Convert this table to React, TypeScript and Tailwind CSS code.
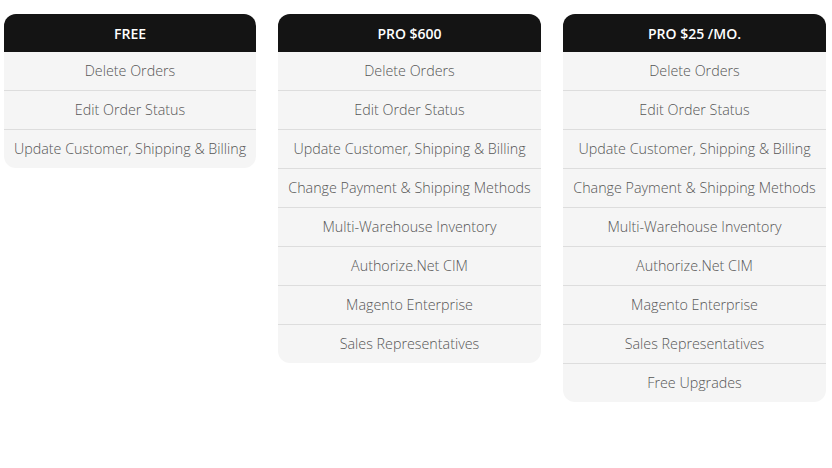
import React from 'react';

interface Plan {
  title: string;
  width: string;
  features: string[];
}

const base = ['Delete Orders', 'Edit Order Status', 'Update Customer, Shipping & Billing'];
const pro = [
  ...base,
  'Change Payment & Shipping Methods',
  'Multi-Warehouse Inventory',
  'Authorize.Net CIM',
  'Magento Enterprise',
  'Sales Representatives',
];

const plans: Plan[] = [
  { title: 'FREE', width: 'w-[252px]', features: base },
  { title: 'PRO $600', width: 'w-[263px]', features: pro },
  { title: 'PRO $25 /MO.', width: 'w-[263px]', features: [...pro, 'Free Upgrades'] },
];

const PlanCard: React.FC<{ plan: Plan }> = ({ plan }) => (
  <div className={`${plan.width} shrink-0 rounded-[12px] overflow-hidden bg-[#f5f5f5]`}>
    <div className="h-[38px] bg-[#141414] flex items-center justify-center text-white text-[14px] font-semibold">
      {plan.title}
    </div>
    {plan.features.map((f, i) => {
      const last = i === plan.features.length - 1;
      return (
        <div
          key={i}
          className={`flex items-center justify-center pb-[1px] text-[14.3px] font-light text-[#555] whitespace-nowrap ${
            last ? 'h-[38px]' : 'h-[39px] border-b border-[#dddddd]'
          }`}
        >
          {f}
        </div>
      );
    })}
  </div>
);

export default function App() {
  return (
    <div
      className="w-[832px] h-[468px] bg-white flex items-start gap-[22px] pl-[4px] pt-[14px]"
      style={{ fontFamily: '"Open Sans", sans-serif' }}
    >
      {plans.map((p, i) => (
        <PlanCard key={i} plan={p} />
      ))}
    </div>
  );
}
